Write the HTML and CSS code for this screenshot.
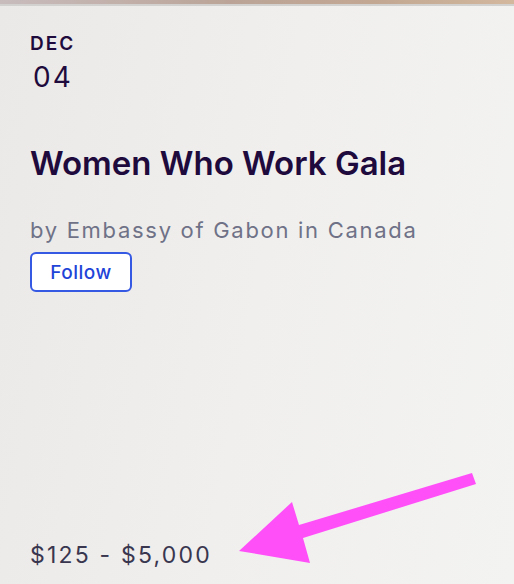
FILE: index.html
```html
<!DOCTYPE html>
<html lang="en">
<head>
    <meta charset="UTF-8">
    <title>Women Who Work Gala</title>
    <link rel="stylesheet" href="styles.css">
</head>
<body>

<div class="topbar"></div>

<div class="card">
    <div class="date">
        <div class="date-month">DEC</div>
        <div class="date-day">04</div>
    </div>

    <h1 class="title">Women Who Work Gala</h1>

    <div class="organizer">by Embassy of Gabon in Canada</div>
    <button class="follow">Follow</button>

    <div class="price">$125 - $5,000</div>
</div>

<svg class="arrow" width="514" height="584" viewBox="0 0 514 584">
    <polygon points="239,551 292,502 299,525 472,473 476,484 303,538 310,563" fill="#ff4ff8"/>
</svg>

</body>
</html>
```

FILE: styles.css
```css
html, body {
    height: 100%;
}
body {
    margin: 0;
    font-family: Inter, 'Noto Sans', sans-serif;
    background: linear-gradient(100deg, #ebe9e7 0%, #f0efee 50%, #f3f3f2 100%);
    color: #1e0a3c;
    position: relative;
    overflow: hidden;
}
.topbar {
    height: 4px;
    background: linear-gradient(90deg, #c8bcbd 0%, #bba497 45%, #c3a893 75%, #d3b89e 100%);
    border-bottom: 2px solid #d2d1cf;
}
.card {
    display: flex;
    flex-direction: column;
    align-items: flex-start;
    box-sizing: border-box;
    height: calc(100% - 6px);
    padding: 28px 30px 15px;
}
.date-month {
    font-size: 19px;
    line-height: 20px;
    font-weight: 600;
    letter-spacing: 2px;
}
.date-day {
    font-size: 28px;
    line-height: 32px;
    font-weight: 400;
    letter-spacing: 2px;
    margin-top: 7px;
    padding-left: 3px;
}
.title {
    margin: 50px 0 0;
    font-size: 33px;
    line-height: 40px;
    font-weight: 600;
}
.organizer {
    margin-top: 34px;
    font-size: 22px;
    line-height: 26px;
    letter-spacing: 1.7px;
    color: #6f7287;
}
.follow {
    margin-top: 9px;
    width: 102px;
    height: 40px;
    background: #fff;
    border: 2px solid #3659e3;
    border-radius: 6px;
    color: #1f44d8;
    font-family: inherit;
    font-size: 19px;
    font-weight: 500;
    letter-spacing: 0.5px;
    padding: 0;
    cursor: pointer;
}
.price {
    margin-top: auto;
    font-size: 23px;
    line-height: 28px;
    letter-spacing: 2.2px;
    color: #39364f;
}
.arrow {
    position: absolute;
    top: 0;
    left: 0;
    pointer-events: none;
}
```
